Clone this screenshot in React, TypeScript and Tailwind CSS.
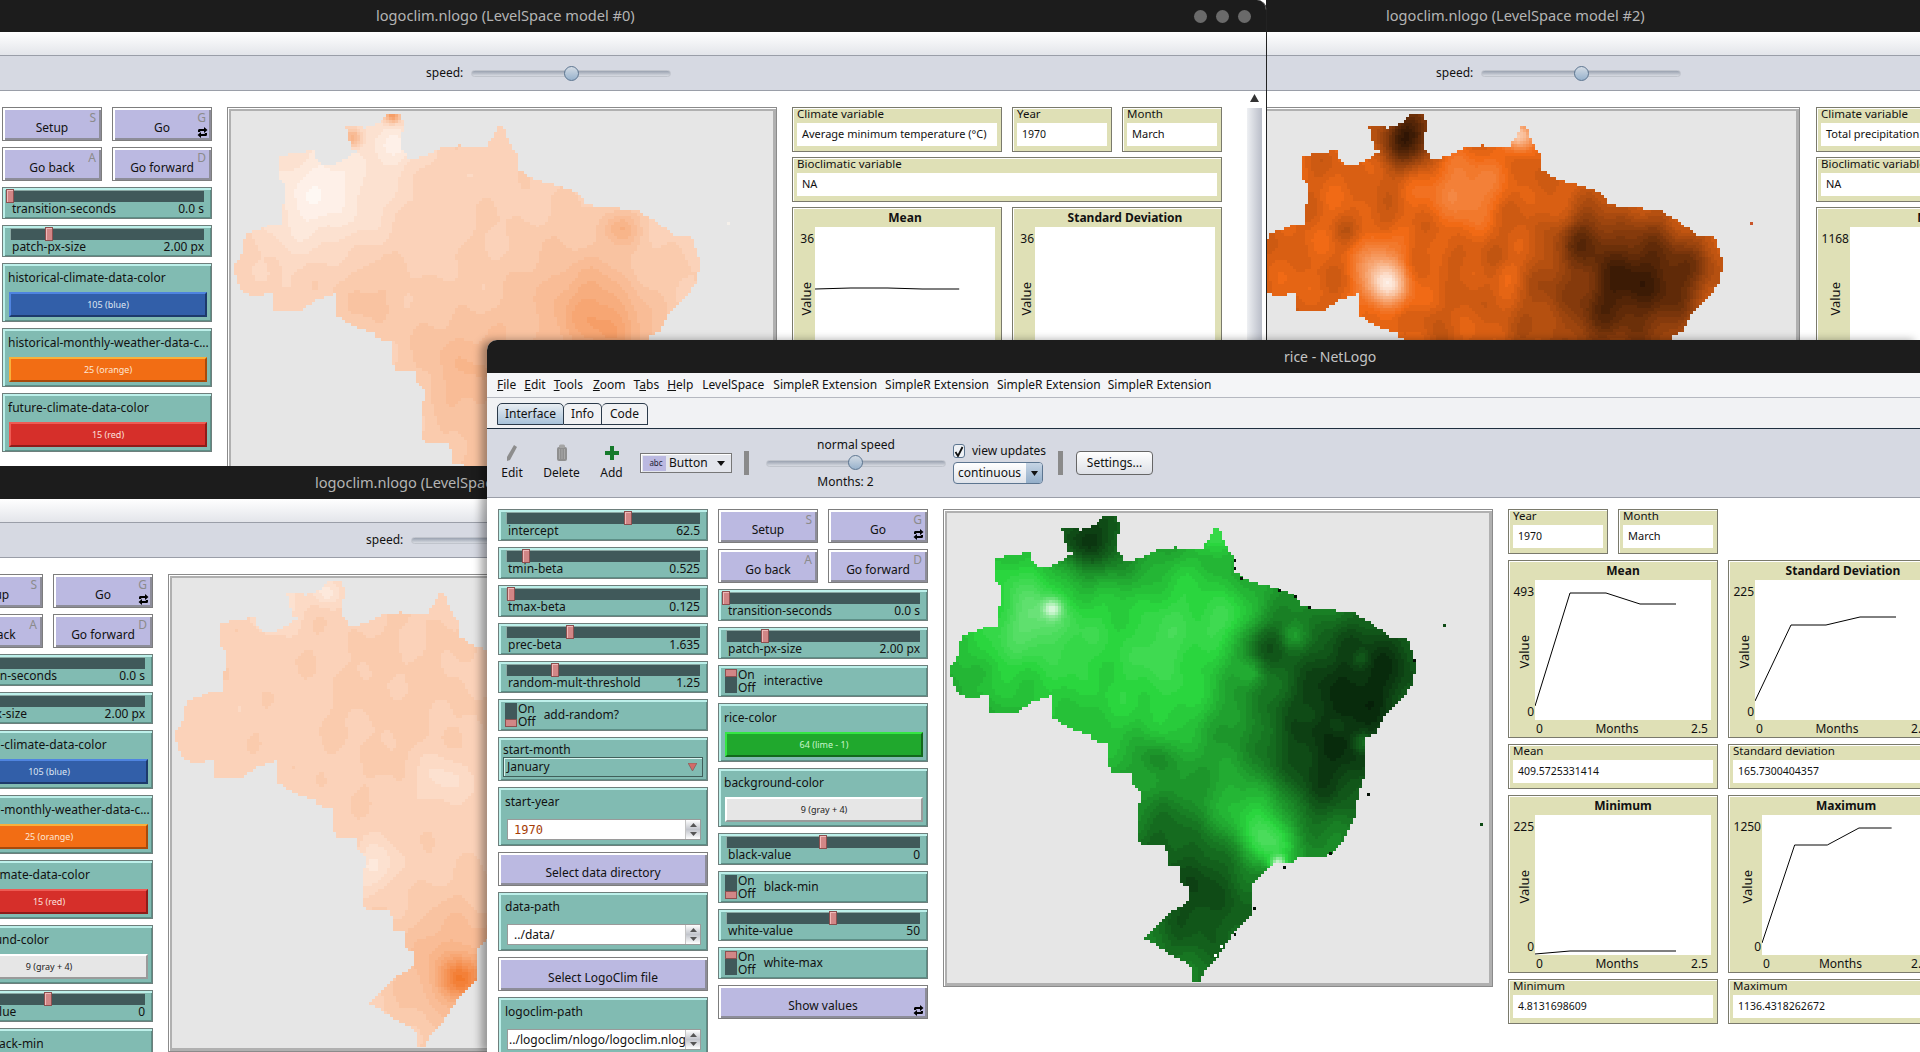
import { useMemo } from "react"

type Spot = [number, number, number, number]

// outline of the country, in a 2.8x grid of the view
const OUTLINE = [
  [490,67],[520,67],[535,110],[525,125],[527,170],[550,198],[610,178],[650,160],[690,157],[730,165],[765,160],[800,97],[815,115],[825,150],[850,185],[850,225],[905,255],[965,270],[1020,290],[1040,320],[1100,332],[1180,335],[1240,370],[1290,410],[1340,412],[1350,440],[1365,490],[1350,550],[1310,595],[1270,640],[1250,680],[1222,690],[1222,790],[1200,860],[1195,905],[1155,985],[1115,1020],[1035,1025],[1015,1042],[960,1045],[930,1075],[900,1105],[905,1180],[870,1215],[850,1240],[810,1300],[775,1335],[755,1372],[732,1372],[735,1335],[700,1312],[650,1285],[630,1265],[597,1258],[660,1190],[725,1150],[725,1110],[700,1100],[702,1052],[668,1050],[660,995],[580,985],[580,895],[595,850],[570,825],[568,790],[508,790],[497,750],[500,707],[450,700],[445,685],[385,665],[335,630],[335,575],[285,590],[245,618],[160,618],[158,570],[105,585],[70,560],[50,505],[75,460],[85,410],[150,382],[185,375],[190,340],[198,262],[177,255],[177,222],[182,185],[240,178],[275,170],[285,200],[310,215],[350,205],[400,170],[378,165],[375,125],[357,100],[420,108],[465,95],
]

const inside = (x: number, y: number) => {
  let hit = false
  for (let i = 0, j = OUTLINE.length - 1; i < OUTLINE.length; j = i++) {
    const [xi, yi] = OUTLINE[i]
    const [xj, yj] = OUTLINE[j]
    if (yi > y !== yj > y && x < ((xj - xi) * (y - yi)) / (yj - yi) + xi) hit = !hit
  }
  return hit
}

const LEVELS = 40

function BrazilMap({ hue, base, spots, noise = 0.03, dots = [] }: { hue: number[]; base: number; spots: Spot[]; noise?: number; dots?: number[][] }) {
  const layers = useMemo(() => {
    const paths: string[] = Array(LEVELS + 1).fill("")
    const cell = 3
    for (let y = 0; y < 478; y += cell) {
      for (let x = 0; x < 550; x += cell) {
        const zx = (x + 1.5 + 13) * 2.8
        const zy = (y + 1.5 + 19) * 2.79
        if (!inside(zx, zy)) continue
        const wobble = Math.sin(zx * 0.031 + zy * 0.017) + Math.sin(zx * 0.023 - zy * 0.041 + 1.3) + Math.sin(zx * 0.057 + zy * 0.011 + 2.1)
        let v = base + (wobble / 3) * noise
        for (const [cx, cy, s, a] of spots) {
          const d = (zx - cx) ** 2 + (zy - cy) ** 2
          v += a * Math.exp(-d / (2 * s * s))
        }
        const idx = Math.round(Math.min(1, Math.max(0.04, v)) * LEVELS)
        paths[idx] += `M${x} ${y}h3v3h-3z`
      }
    }
    return paths
  }, [base, spots, noise])

  const colorOf = (i: number) => {
    const v = i / LEVELS
    const c = hue.map((h) => Math.round(v < 0.5 ? (h * v) / 0.5 : h + ((255 - h) * (v - 0.5)) / 0.5))
    return `rgb(${c[0]},${c[1]},${c[2]})`
  }

  return (
    <svg viewBox="0 0 550 478" className="block h-full w-full" shapeRendering="crispEdges">
      {layers.map((d, i) => (d ? <path key={i} d={d} fill={colorOf(i)} /> : null))}
      {dots.map(([x, y, c], i) => (
        <rect key={i} x={x / 2.8 - 13} y={y / 2.79 - 19} width="3" height="3" fill={["#0d4a14", "#050f06", "#ffffff", "#c9552a", "#f5f0ea"][c]} />
      ))}
    </svg>
  )
}

const GREEN_SPOTS: Spot[] = [
  [560,480,260,.14],[250,350,180,.1],[240,240,50,.06],[130,450,100,.05],[760,350,120,.08],[900,900,70,.17],[960,990,50,.2],[975,1043,14,.45],[340,328,18,.32],[300,360,60,.12],[830,360,50,.08],[660,450,50,.04],[690,590,70,.05],[800,120,35,.14],
  [480,130,90,-.22],[400,140,50,-.12],[1150,620,170,-.24],[1080,820,90,-.08],[1270,450,90,-.1],[940,430,55,-.13],[630,750,35,-.09],[130,510,30,-.06],[780,1200,140,-.12],[640,960,100,-.09],[750,1090,100,-.06],[1210,470,20,.07],[1215,705,20,.12],[1020,410,25,.09],[900,510,25,.08],[1140,660,18,.06],[1050,630,20,.05],
]
const GREEN_DOTS = [[1438,373,0],[1542,930,0],[850,190,1],[850,212,1],[868,240,1],[975,275,1],[1020,290,1],[1060,322,1],[1355,470,1],[1225,845,1],[905,1165,1],[850,1238,1],[990,1050,1],[1118,1010,1],[812,1272,2],[795,1298,2]]

const TEMP_SPOTS: Spot[] = [
  [500,153,45,.08],[258,312,110,.07],[360,250,120,.05],[500,75,14,-.2],[386,137,18,-.15],[1142,388,35,-.09],[1044,591,90,-.07],[1114,684,70,-.09],[428,583,90,-.04],[686,767,90,-.06],[1000,700,220,-.05],[820,1040,150,-.05],
]
const PALE_SPOTS: Spot[] = [
  [854,1186,40,-.2],[860,1150,130,-.1],[620,870,45,.07],[807,628,50,.06],[333,130,50,.07],[480,100,30,.08],[700,400,200,-.02],
]
const RAIN_SPOTS: Spot[] = [
  [480,130,60,-.34],[417,550,42,.42],[390,470,50,.15],[630,276,70,.15],[790,130,28,.34],[1117,544,120,-.23],[977,416,50,-.13],[1240,500,70,-.1],[1000,620,170,-.12],[420,380,40,-.05],[600,480,30,-.05],[540,640,30,-.05],[300,400,28,-.05],[760,520,30,.05],
]

const ORANGE = [241, 106, 21]
const LIME = [42, 214, 62]

function ForeverIcon({ className }: { className: string }) {
  return (
    <svg width="11" height="11" viewBox="0 0 11 11" className={className}>
      <path d="M1 5V3.500C1 2.500 1.700 2 2.500 2H7V0l3.500 3L7 6V4H3.200v1z" fill="#000" />
      <path d="M10 6v1.500C10 8.500 9.300 9 8.500 9H4v2L.5 8 4 5v2h3.800V6z" fill="#000" />
    </svg>
  )
}

function Button({ label, hot, forever, className = "w-[100px]" }: { label: string; hot?: string; forever?: boolean; className?: string }) {
  return (
    <div className={`relative flex h-[34px] shrink-0 items-center justify-center border border-[#7d7d7d] bg-[#bbb9e1] pt-[7px] text-[12px] text-[#111] shadow-[inset_2px_2px_0_#fff,inset_-2px_-2px_0_#8d8d99] ${className}`}>
      {label}
      {hot && <span className="absolute top-[2px] right-[5px] text-[12px] leading-[16px] text-[#8b8b8b]">{hot}</span>}
      {forever && <ForeverIcon className="absolute right-[3px] bottom-[2px]" />}
    </div>
  )
}

function Slider({ label, value, pos }: { label: string; value: string; pos: number }) {
  return (
    <div className="relative h-[32px] w-[210px] shrink-0 border border-[#6e7f7c] bg-[#81bbb2] px-[7px] pt-[2px] shadow-[inset_2px_2px_0_#bdf0ea,inset_-1px_-1px_0_#5d8f87]">
      <div className="h-[12px] border-t border-l border-[#8aa8a3] bg-[#40595a]" />
      <div className="absolute top-[1px] h-[14px] w-[8px] border border-[#8c5050] bg-[#d28686] shadow-[inset_1px_1px_0_#f0b9b9]" style={{ left: pos }} />
      <div className="flex justify-between pl-[2px] text-[12px] leading-[14px] text-[#111]">
        <span>{label}</span>
        <span>{value}</span>
      </div>
    </div>
  )
}

function Switch({ label, on }: { label: string; on?: boolean }) {
  return (
    <div className="flex h-[32px] w-[210px] shrink-0 items-center border border-[#6e7f7c] bg-[#81bbb2] pl-[6px] shadow-[inset_2px_2px_0_#bdf0ea,inset_-1px_-1px_0_#5d8f87]">
      <div className={`flex h-[24px] w-[12px] shrink-0 flex-col bg-[#40595a] ${on ? "justify-start" : "justify-end"}`}>
        <div className="h-[8px] w-[12px] border border-[#8c5050] bg-[#d28686]" />
      </div>
      <div className="ml-[1px] text-[12px] leading-[13px] text-[#111]">
        <div>On</div>
        <div>Off</div>
      </div>
      <span className="ml-[8px] text-[12px] text-[#111]">{label}</span>
    </div>
  )
}

function ColorBox({ label, text, tone }: { label: string; text: string; tone: string }) {
  return (
    <div className="h-[59px] w-[210px] shrink-0 border border-[#6e7f7c] bg-[#81bbb2] pt-[6px] pl-[5px] shadow-[inset_2px_2px_0_#bdf0ea,inset_-1px_-1px_0_#5d8f87]">
      <div className="overflow-hidden text-[12px] leading-[16px] whitespace-nowrap text-[#111]">{label}</div>
      <div className={`mt-[6px] ml-[1px] flex h-[25px] w-[198px] items-center justify-center text-[9px] ${tone}`}>{text}</div>
    </div>
  )
}

const BLUE = "bg-[#325fa9] text-[#dfe6f2] border-2 border-t-[#4f84e0] border-l-[#4f84e0] border-r-[#1d3a6b] border-b-[#1d3a6b]"
const ORANGE_BAR = "bg-[#f26d14] text-[#fde6d4] border-2 border-t-[#f9b03a] border-l-[#f9b03a] border-r-[#a84a0c] border-b-[#a84a0c]"
const RED = "bg-[#d62f2a] text-[#fbe0de] border-2 border-t-[#ee5b54] border-l-[#ee5b54] border-r-[#8e1c19] border-b-[#8e1c19]"
const GREEN = "bg-[#20a82d] text-[#c8f5cc] border-2 border-t-[#35e644] border-l-[#35e644] border-r-[#12691b] border-b-[#12691b]"
const GRAY = "bg-[#e6e6e6] text-[#222] border-2 border-t-[#fff] border-l-[#fff] border-r-[#9a9a9a] border-b-[#9a9a9a]"

function Chooser({ label, value }: { label: string; value: string }) {
  return (
    <div className="h-[44px] w-[210px] shrink-0 border border-[#6e7f7c] bg-[#81bbb2] px-[4px] pt-[4px] shadow-[inset_2px_2px_0_#bdf0ea,inset_-1px_-1px_0_#5d8f87]">
      <div className="text-[12px] leading-[15px] text-[#111]">{label}</div>
      <div className="flex h-[20px] items-center justify-between border border-[#405f5a] pr-[5px] pl-[3px] text-[12px] text-[#111] shadow-[inset_1px_1px_0_#d8f5f0]">
        {value}
        <svg width="9" height="8" viewBox="0 0 9 8"><path d="M0 0h9L4.5 8z" fill="#d26a68" stroke="#7b5a58" strokeWidth=".7" /></svg>
      </div>
    </div>
  )
}

function InputBox({ label, value, numeric, tight }: { label: string; value: string; numeric?: boolean; tight?: boolean }) {
  return (
    <div className="h-[59px] w-[210px] shrink-0 border border-[#6e7f7c] bg-[#81bbb2] pt-[6px] pl-[6px] shadow-[inset_2px_2px_0_#bdf0ea,inset_-1px_-1px_0_#5d8f87]">
      <div className="text-[12px] leading-[16px] text-[#111]">{label}</div>
      <div className="mt-[9px] ml-[2px] flex h-[21px] w-[194px] overflow-hidden border border-[#9a9a9a] bg-white">
        <span className={`min-w-0 flex-1 overflow-hidden leading-[20px] whitespace-nowrap ${tight ? "pl-[1px]" : "pl-[6px]"} ${numeric ? "font-['DejaVu_Sans_Mono'] text-[12px] text-[#a63c05]" : "text-[12px] text-[#111]"}`}>{value}</span>
        <div className="flex w-[15px] shrink-0 flex-col items-center justify-between border-l border-[#c4c4c4] bg-gradient-to-b from-white via-[#c2c5cc] to-white py-[3px]">
          <svg width="7" height="4" viewBox="0 0 7 4"><path d="M0 4h7L3.500 0z" fill="#555" /></svg>
          <svg width="7" height="4" viewBox="0 0 7 4"><path d="M0 0h7L3.500 4z" fill="#555" /></svg>
        </div>
      </div>
    </div>
  )
}

function Monitor({ label, value, className = "w-[210px]" }: { label: string; value: string; className?: string }) {
  const numeric = /^[\d.]+$/.test(value)
  return (
    <div className={`h-[45px] shrink-0 border border-[#7a7a6c] bg-[#dfe0b6] px-[4px] shadow-[inset_1px_1px_0_#fff] ${className}`}>
      <div className="h-[15px] text-[11.5px] leading-[11px] text-[#111]">{label}</div>
      <div className={`flex h-[23px] w-full items-center overflow-hidden bg-white pl-[5px] whitespace-nowrap text-[#111] ${numeric ? "text-[10.5px]" : "text-[11px]"}`}>{value}</div>
    </div>
  )
}

function Plot({ title, yMax, xMax, points, gutter = "w-[26px]" }: { title: string; yMax: string; xMax: string; points: string; gutter?: string }) {
  const titlePad = gutter === "w-[26px]" ? "pl-[20px]" : gutter === "w-[22px]" ? "pl-[16px]" : "pl-[26px]"
  const axisPad = gutter === "w-[26px]" ? "pl-[27px]" : gutter === "w-[22px]" ? "pl-[23px]" : "pl-[34px]"
  return (
    <div className="h-[178px] w-[210px] shrink-0 border border-[#7a7a6c] bg-[#dfe0b6] shadow-[inset_1px_1px_0_#fff] text-[#111]">
      <div className={`h-[19px] text-center text-[12px] leading-[20px] font-bold ${titlePad}`}>{title}</div>
      <div className="flex h-[140px] pr-[6px]">
        <div className={`flex shrink-0 flex-col items-end justify-between pt-[5px] pr-[1px] pb-[1px] text-[12px] leading-[14px] ${gutter}`}>
          <span>{yMax}</span>
          <span className="ml-[4px] self-center text-[13px] [writing-mode:vertical-rl] rotate-180">Value</span>
          <span>0</span>
        </div>
        <svg viewBox="0 0 176 140" preserveAspectRatio="none" className="min-w-0 flex-1 bg-white">
          <polyline points={points} fill="none" stroke="#000" strokeWidth="1" />
        </svg>
      </div>
      <div className={`flex justify-between pr-[9px] text-[12px] leading-[17px] ${axisPad}`}>
        <span>0</span>
        <span>Months</span>
        <span>{xMax}</span>
      </div>
    </div>
  )
}

function World({ children }: { children: React.ReactNode }) {
  return (
    <div className="h-[478px] w-[550px] shrink-0 border border-[#8b8b8b] bg-[#e6e6e6] shadow-[inset_1px_1px_0_#fff,inset_3px_3px_0_#b0b0b0,inset_-3px_-3px_0_#b0b0b0]">
      {children}
    </div>
  )
}

// left column of a LevelSpace model window
function ModelControls({ extra }: { extra?: boolean }) {
  return (
    <div className="flex w-[210px] shrink-0 flex-col gap-[6px]">
      <div className="flex gap-[10px]">
        <Button label="Setup" hot="S" />
        <Button label="Go" hot="G" forever />
      </div>
      <div className="flex gap-[10px]">
        <Button label="Go back" hot="A" />
        <Button label="Go forward" hot="D" />
      </div>
      <Slider label="transition-seconds" value="0.0 s" pos={3} />
      <Slider label="patch-px-size" value="2.00 px" pos={42} />
      <ColorBox label="historical-climate-data-color" text="105 (blue)" tone={BLUE} />
      <ColorBox label="historical-monthly-weather-data-c..." text="25 (orange)" tone={ORANGE_BAR} />
      <ColorBox label="future-climate-data-color" text="15 (red)" tone={RED} />
      {extra && (
        <>
          <ColorBox label="background-color" text="9 (gray + 4)" tone={GRAY} />
          <Slider label="black-value" value="0" pos={100} />
          <Switch label="black-min" />
        </>
      )}
    </div>
  )
}

function ModelPanels({ climate, yMax, line, gutter }: { climate: string; yMax: string; line?: string; gutter: string }) {
  return (
    <div className="flex w-[430px] shrink-0 flex-col gap-[5px]">
      <div className="flex gap-[10px]">
        <Monitor label="Climate variable" value={climate} />
        <Monitor label="Year" value="1970" className="w-[100px]" />
        <Monitor label="Month" value="March" className="w-[100px]" />
      </div>
      <Monitor label="Bioclimatic variable" value="NA" className="w-[430px]" />
      <div className="flex gap-[10px]">
        <Plot title="Mean" yMax={yMax} xMax="2.5" points={line ?? ""} gutter={gutter} />
        <Plot title="Standard Deviation" yMax={yMax} xMax="2.5" points="" gutter={gutter} />
      </div>
    </div>
  )
}

function ModelChrome({ title, titleClass, titleHeight, speedClass }: { title: string; titleClass: string; titleHeight: string; speedClass: string }) {
  return (
    <>
      <div className={`flex items-center bg-[#1c1c1c] text-[14.6px] whitespace-nowrap text-[#b4b4b4] ${titleHeight} ${titleClass}`}>{title}</div>
      <div className="h-[24px] border-b border-[#9a9ea8] bg-gradient-to-b from-white to-[#e3e5ea]" />
      <div className={`flex h-[35px] items-center border-b border-[#9a9ea8] bg-[#d6d9e2] text-[12px] text-[#111] ${speedClass}`}>
        <span>speed:</span>
        <div className="relative ml-[8px] h-[7px] w-[200px] rounded-full border border-[#c0c4cc] bg-gradient-to-b from-[#9aa2b0] to-[#d8dbe2]">
          <div className="absolute top-[-5px] left-[92px] h-[15px] w-[15px] rounded-full border border-[#5c7590] bg-gradient-to-b from-[#d3dbe4] to-[#98b2cc]" />
        </div>
      </div>
    </>
  )
}

function MainToolbar() {
  return (
    <div className="flex h-[69px] items-center border-b border-[#9a9ea8] bg-[#d6d9e2] text-[12px] text-[#111]">
      <div className="flex w-[50px] flex-col items-center">
        <svg width="12" height="18" viewBox="0 0 12 18"><path d="M8 1l3 2-7 13-3 1 0-4z" fill="#8d8d8d" /></svg>
        <span className="mt-[2px]">Edit</span>
      </div>
      <div className="flex w-[49px] flex-col items-center">
        <svg width="12" height="18" viewBox="0 0 12 18"><rect x="1" y="3" width="10" height="14" rx="2" fill="#8f8f8f" /><rect x="3" y="0.5" width="6" height="3.500" rx="1.500" fill="#a5a5a5" /><path d="M3.500 5v10M6 5v10M8.500 5v10" stroke="#a8a8a8" /></svg>
        <span className="mt-[2px]">Delete</span>
      </div>
      <div className="flex w-[51px] flex-col items-center">
        <svg width="14" height="18" viewBox="0 0 14 18"><path d="M5 2h4v5h5v4H9v5H5v-5H0V7h5z" fill="#167a2c" /></svg>
        <span className="mt-[2px]">Add</span>
      </div>
      <div className="ml-[3px] flex h-[20px] w-[92px] items-center border border-[#777] bg-[#e4e6ec] pl-[2px] shadow-[inset_1px_1px_0_#fff]">
        <span className="flex h-[15px] w-[23px] items-center justify-center bg-[#bbb9e1] pl-[3px] text-[8px] text-[#223]">abc</span>
        <span className="ml-[3px] flex-1">Button</span>
        <svg width="8" height="5" viewBox="0 0 8 5" className="mr-[6px]"><path d="M0 0h8L4 5z" fill="#111" /></svg>
      </div>
      <div className="ml-[12px] h-[24px] w-[5px] bg-[#8a8a8a]" />
      <div className="relative ml-[17px] h-[60px] w-[180px] pt-[3px]">
        <div className="text-center leading-[18px]">normal speed</div>
        <div className="mt-[6px] h-[7px] rounded-full border border-[#c0c4cc] bg-gradient-to-b from-[#9aa2b0] to-[#d8dbe2]" />
        <div className="absolute top-[22px] left-[82px] h-[15px] w-[15px] rounded-full border border-[#5c7590] bg-gradient-to-b from-[#d3dbe4] to-[#98b2cc]" />
        <div className="mt-[6px] pr-[21px] text-center leading-[18px]">Months: 2</div>
      </div>
      <div className="ml-[7px] flex w-[92px] flex-col gap-[2px]">
        <div className="flex h-[18px] items-center gap-[7px]">
          <span className="flex h-[14px] w-[14px] items-center justify-center rounded-[3px] border border-[#5c7590] bg-[#eef1f5]">
            <svg width="10" height="11" viewBox="0 0 10 11"><path d="M1.500 6l2.500 4L8.500 1" fill="none" stroke="#111" strokeWidth="1.800" /></svg>
          </span>
          <span className="whitespace-nowrap">view updates</span>
        </div>
        <div className="flex h-[22px] w-[90px] overflow-hidden rounded-[4px] border border-[#5c7590] bg-gradient-to-b from-white to-[#dfe3ea]">
          <span className="flex-1 pl-[4px] leading-[20px]">continuous</span>
          <span className="flex w-[16px] items-center justify-center bg-gradient-to-b from-[#c5d4e4] to-[#93aec9]">
            <svg width="7" height="5" viewBox="0 0 7 5"><path d="M0 0h7L3.500 5z" fill="#111" /></svg>
          </span>
        </div>
      </div>
      <div className="ml-[13px] h-[24px] w-[5px] bg-[#8a8a8a]" />
      <div className="ml-[13px] flex h-[24px] w-[77px] items-center justify-center rounded-[4px] border border-[#666] bg-gradient-to-b from-white to-[#dde0e6]">Settings...</div>
    </div>
  )
}

function Menu({ first, rest, pre = "", className = "" }: { first: string; rest: string; pre?: string; className?: string }) {
  return (
    <span className={className}>
      {pre}
      <span className="underline">{first}</span>
      {rest}
    </span>
  )
}

export default function App() {
  const meanLine = "0,62 35,61 71,61 105,62 141,62"
  return (
    <div className="relative h-[1052px] w-[1920px] overflow-hidden bg-white font-['Noto_Sans',sans-serif]">
      {/* model #2, behind everything */}
      <div className="absolute top-0 left-[1266px] h-[340px] w-[654px] overflow-hidden">
        <ModelChrome title="logoclim.nlogo (LevelSpace model #2)" titleClass="pl-[120px]" titleHeight="h-[32px]" speedClass="pl-[170px]" />
        <div className="-ml-[16px] flex gap-[16px] pt-[16px]">
          <World>
            <BrazilMap hue={ORANGE} base={0.46} noise={0.05} spots={RAIN_SPOTS} dots={[[1438,373,3]]} />
          </World>
          <ModelPanels climate="Total precipitation (mm)" yMax="1168" gutter="w-[33px]" />
        </div>
      </div>

      {/* model #0 */}
      <div className="absolute top-0 left-0 flex h-[466px] w-[1267px] flex-col overflow-hidden rounded-tr-[10px] border-r border-[#222] bg-white">
        <ModelChrome title="logoclim.nlogo (LevelSpace model #0)" titleClass="pl-[376px]" titleHeight="h-[32px]" speedClass="pl-[426px]" />
        <div className="absolute top-[10px] left-[1194px] flex gap-[9px]">
          <span className="h-[13px] w-[13px] rounded-full bg-[#6a6a6a]" />
          <span className="h-[13px] w-[13px] rounded-full bg-[#6a6a6a]" />
          <span className="h-[13px] w-[13px] rounded-full bg-[#6a6a6a]" />
        </div>
        <div className="flex min-h-0 flex-1">
          <div className="flex min-w-0 flex-1 gap-[15px] overflow-hidden pt-[16px] pl-[2px]">
            <ModelControls />
            <World>
              <BrazilMap hue={ORANGE} base={0.85} noise={0.015} spots={TEMP_SPOTS} dots={[[1438,373,4]]} />
            </World>
            <ModelPanels climate="Average minimum temperature (°C)" yMax="36" line={meanLine} gutter="w-[22px]" />
          </div>
          <div className="mr-[4px] w-[15px] shrink-0 bg-gradient-to-r from-[#eef0f3] to-[#b9bdc8]">
            <div className="flex h-[17px] items-start justify-center bg-white pt-[3px]">
              <svg width="9" height="8" viewBox="0 0 9 8"><path d="M0 8h9L4.500 0z" fill="#333" /></svg>
            </div>
          </div>
        </div>
      </div>

      {/* model #1 */}
      <div className="absolute top-[466px] left-0 h-[586px] w-[500px] overflow-hidden bg-white">
        <ModelChrome title="logoclim.nlogo (LevelSpace model #1)" titleClass="pl-[315px]" titleHeight="h-[33px]" speedClass="pl-[366px]" />
        <div className="-ml-[57px] flex gap-[15px] pt-[16px]">
          <ModelControls extra />
          <World>
            <BrazilMap hue={ORANGE} base={0.85} noise={0.015} spots={PALE_SPOTS} />
          </World>
        </div>
      </div>

      {/* rice - NetLogo */}
      <div className="absolute top-[340px] left-[487px] h-[712px] w-[1433px] overflow-hidden rounded-tl-[10px] bg-white text-[12px] text-[#111] shadow-[-6px_0_8px_rgba(0,0,0,0.35)]">
        <div className="flex h-[33px] items-center bg-[#1c1c1c] pl-[797px] text-[14px] text-[#c4c4c4]">rice - NetLogo</div>
        <div className="flex h-[25px] items-center gap-[8px] border-b border-[#b5b8c0] bg-[#f4f5f7] pl-[10px]">
          <Menu first="F" rest="ile" />
          <Menu first="E" rest="dit" />
          <Menu first="T" rest="ools" />
          <Menu first="Z" rest="oom" className="ml-[2px]" />
          <Menu pre="T" first="a" rest="bs" />
          <Menu first="H" rest="elp" />
          <span className="ml-[1px]">LevelSpace</span>
          <span className="ml-[1px]">SimpleR Extension</span>
          <span>SimpleR Extension</span>
          <span>SimpleR Extension</span>
          <span className="-ml-[1px]">SimpleR Extension</span>
        </div>
        <div className="flex h-[31px] items-end border-b border-[#1f2f3f] bg-[#f1f2f4] pl-[10px]">
          <div className="mb-[3px] flex h-[22px] w-[67px] items-center justify-center rounded-t-[5px] border border-[#2b3a4a] bg-gradient-to-b from-[#e8edf2] to-[#a9c3da]">Interface</div>
          <div className="mb-[3px] flex h-[22px] w-[38px] items-center justify-center rounded-t-[5px] border border-l-0 border-[#2b3a4a] bg-[#f1f2f4]">Info</div>
          <div className="mb-[3px] flex h-[22px] w-[46px] items-center justify-center rounded-t-[5px] border border-l-0 border-[#2b3a4a] bg-[#f1f2f4]">Code</div>
        </div>
        <MainToolbar />
        <div className="flex pt-[11px] pl-[11px]">
          <div className="flex w-[210px] shrink-0 flex-col gap-[6px]">
            <Slider label="intercept" value="62.5" pos={125} />
            <Slider label="tmin-beta" value="0.525" pos={23} />
            <Slider label="tmax-beta" value="0.125" pos={8} />
            <Slider label="prec-beta" value="1.635" pos={67} />
            <Slider label="random-mult-threshold" value="1.25" pos={52} />
            <Switch label="add-random?" />
            <Chooser label="start-month" value="January" />
            <InputBox label="start-year" value="1970" numeric />
            <Button label="Select data directory" className="w-[210px]" />
            <InputBox label="data-path" value="../data/" />
            <Button label="Select LogoClim file" className="w-[210px]" />
            <InputBox label="logoclim-path" value="../logoclim/nlogo/logoclim.nlogo" tight />
          </div>
          <div className="ml-[10px] flex w-[210px] shrink-0 flex-col gap-[6px]">
            <div className="flex gap-[10px]">
              <Button label="Setup" hot="S" />
              <Button label="Go" hot="G" forever />
            </div>
            <div className="flex gap-[10px]">
              <Button label="Go back" hot="A" />
              <Button label="Go forward" hot="D" />
            </div>
            <Slider label="transition-seconds" value="0.0 s" pos={3} />
            <Slider label="patch-px-size" value="2.00 px" pos={42} />
            <Switch label="interactive" on />
            <ColorBox label="rice-color" text="64 (lime - 1)" tone={GREEN} />
            <ColorBox label="background-color" text="9 (gray + 4)" tone={GRAY} />
            <Slider label="black-value" value="0" pos={100} />
            <Switch label="black-min" />
            <Slider label="white-value" value="50" pos={110} />
            <Switch label="white-max" on />
            <Button label="Show values" forever className="w-[210px]" />
          </div>
          <div className="ml-[15px]">
            <World>
              <BrazilMap hue={LIME} base={0.34} spots={GREEN_SPOTS} dots={GREEN_DOTS} />
            </World>
          </div>
          <div className="ml-[15px] flex w-[430px] shrink-0 flex-col gap-[6px]">
            <div className="flex gap-[10px]">
              <Monitor label="Year" value="1970" className="w-[100px]" />
              <Monitor label="Month" value="March" className="w-[100px]" />
            </div>
            <div className="flex gap-[10px]">
              <Plot title="Mean" yMax="493" xMax="2.5" points="0,126 35,13 71,13 105,24 141,24" />
              <Plot title="Standard Deviation" yMax="225" xMax="2.5" points="0,121 36,45 71,45 105,37 141,37" />
            </div>
            <div className="flex gap-[10px]">
              <Monitor label="Mean" value="409.5725331414" />
              <Monitor label="Standard deviation" value="165.7300404357" />
            </div>
            <div className="flex gap-[10px]">
              <Plot title="Minimum" yMax="225" xMax="2.5" points="0,139 35,136 141,136" />
              <Plot title="Maximum" yMax="1250" xMax="2.5" points="0,128 34,30 68,30 101,13 135,13" gutter="w-[33px]" />
            </div>
            <div className="flex gap-[10px]">
              <Monitor label="Minimum" value="4.8131698609" />
              <Monitor label="Maximum" value="1136.4318262672" />
            </div>
          </div>
        </div>
      </div>
    </div>
  )
}
